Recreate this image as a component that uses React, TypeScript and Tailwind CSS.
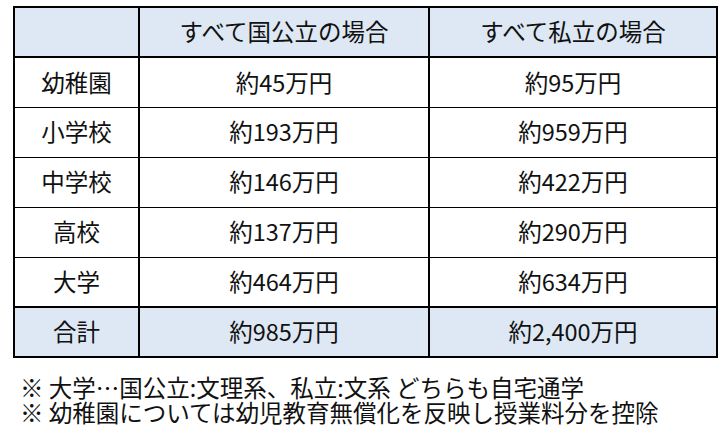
const rows = [
  { label: "幼稚園", pub: "約45万円", priv: "約95万円" },
  { label: "小学校", pub: "約193万円", priv: "約959万円" },
  { label: "中学校", pub: "約146万円", priv: "約422万円" },
  { label: "高校", pub: "約137万円", priv: "約290万円" },
  { label: "大学", pub: "約464万円", priv: "約634万円" },
]

export default function App() {
  return (
    <div
      className="h-[441px] w-[724px] bg-white text-[23.5px] text-[#111]"
      style={{ fontFamily: '"Noto Sans CJK JP", "Noto Sans", sans-serif' }}
    >
      <div className="pl-[13px] pt-[6px]">
        <table className="w-[705px] table-fixed border-collapse border-2 border-black text-center">
          <colgroup>
            <col className="w-[125px]" />
            <col className="w-[290px]" />
            <col />
          </colgroup>
          <thead>
            <tr className="h-[50px] bg-[#dde8f4]">
              <th className="border-2 border-black font-normal"></th>
              <th className="border-2 border-black font-normal">すべて国公立の場合</th>
              <th className="border-2 border-black font-normal">すべて私立の場合</th>
            </tr>
          </thead>
          <tbody>
            {rows.map((r) => (
              <tr key={r.label} className="h-[50px]">
                <td className="border border-x-2 border-black">{r.label}</td>
                <td className="border border-x-2 border-black">{r.pub}</td>
                <td className="border border-x-2 border-black">{r.priv}</td>
              </tr>
            ))}
            <tr className="h-[50px] bg-[#dde8f4]">
              <td className="border-2 border-black">合計</td>
              <td className="border-2 border-black">約985万円</td>
              <td className="border-2 border-black">約2,400万円</td>
            </tr>
          </tbody>
        </table>
      </div>
      <div className="mt-[17px] pl-[20px] leading-[25px]">
        <p>※ 大学…国公立:文理系、私立:文系 どちらも自宅通学</p>
        <p>※ 幼稚園については幼児教育無償化を反映し授業料分を控除</p>
      </div>
    </div>
  )
}
